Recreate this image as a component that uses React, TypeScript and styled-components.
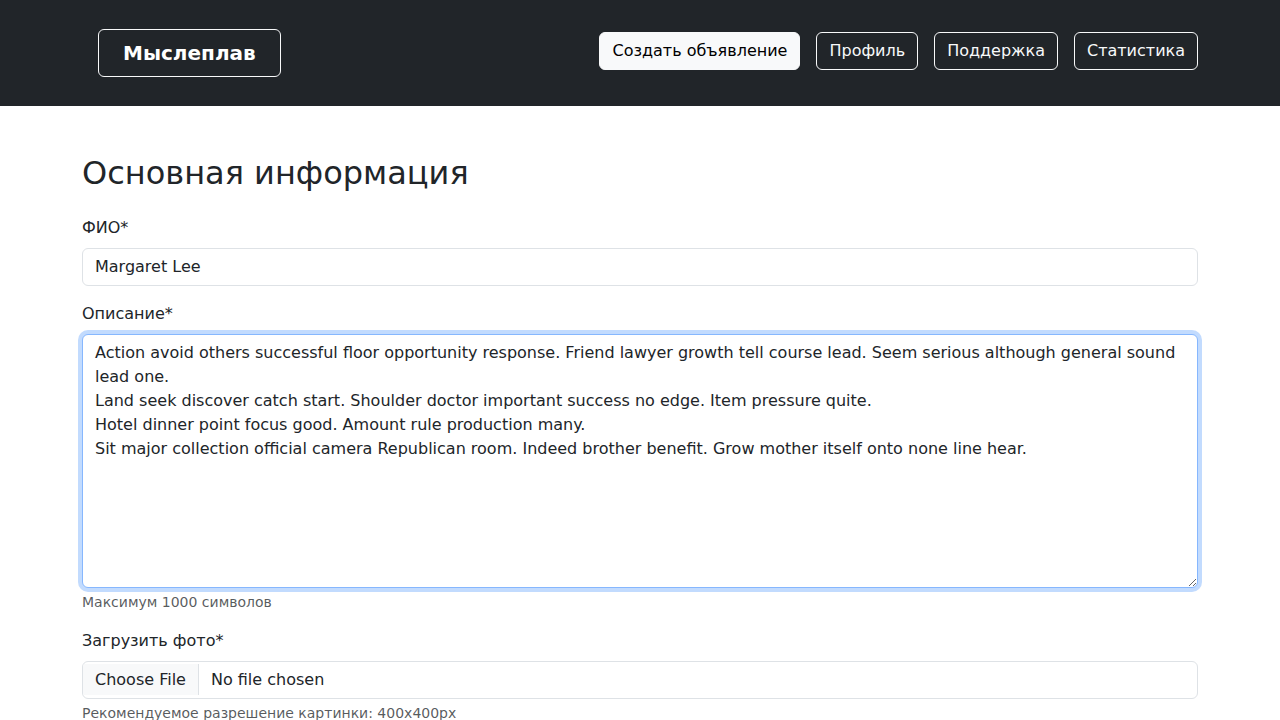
import React from "react";
import styled, { createGlobalStyle } from "styled-components";

const GlobalStyle = createGlobalStyle`
  *, *::before, *::after { box-sizing: border-box; }
  body {
    margin: 0;
    font-family: "DejaVu Sans", "Noto Sans", sans-serif;
    font-size: 16px;
    line-height: 1.5;
    color: #212529;
    background: #fff;
  }
`;

const Header = styled.header`
  background: #212529;
  padding: 29px 0;
`;

const Container = styled.div`
  width: 1140px;
  max-width: 100%;
  margin: 0 auto;
  padding: 0 12px;
`;

const NavRow = styled.div`
  display: flex;
  justify-content: space-between;
  align-items: flex-start;
`;

const Brand = styled.a`
  display: inline-block;
  margin-left: 16px;
  padding: 8px 24px;
  border: 1px solid #f8f9fa;
  border-radius: 6px;
  color: #fff;
  font-size: 20px;
  font-weight: 700;
  line-height: 30px;
  text-decoration: none;
`;

const NavGroup = styled.nav`
  display: flex;
  gap: 16px;
  padding-top: 3px;
`;

const NavButton = styled.a<{ $solid?: boolean }>`
  display: inline-block;
  padding: 6px 12px;
  font-size: 16px;
  line-height: 24px;
  border-radius: 6px;
  border: 1px solid #f8f9fa;
  background: ${(p) => (p.$solid ? "#f8f9fa" : "transparent")};
  color: ${(p) => (p.$solid ? "#000" : "#f8f9fa")};
  text-decoration: none;
  white-space: nowrap;
`;

const Main = styled.main`
  padding-top: 48px;
`;

const Title = styled.h2`
  margin: 0 0 24px;
  font-size: 32px;
  font-weight: 500;
  line-height: 1.2;
`;

const Field = styled.div`
  margin-bottom: 16px;
`;

const Label = styled.label`
  display: inline-block;
  margin-bottom: 8px;
`;

const baseControl = `
  display: block;
  width: 100%;
  padding: 6px 12px;
  font-family: inherit;
  font-size: 16px;
  font-weight: 400;
  line-height: 1.5;
  color: #212529;
  background: #fff;
  border: 1px solid #dee2e6;
  border-radius: 6px;
  outline: none;
`;

const TextInput = styled.input`
  ${baseControl}
`;

const TextArea = styled.textarea<{ $focused?: boolean }>`
  ${baseControl}
  resize: vertical;
  border-color: ${(p) => (p.$focused ? "#86b7fe" : "#dee2e6")};
  box-shadow: ${(p) => (p.$focused ? "0 0 0 4px rgba(13,110,253,.25)" : "none")};
`;

const FileInput = styled.input`
  ${baseControl}
  overflow: hidden;
  &::file-selector-button {
    padding: 6px 12px;
    margin: -6px 12px -6px -12px;
    font-family: inherit;
    font-size: 16px;
    color: #212529;
    background-color: #f8f9fa;
    border: 0 solid #dee2e6;
    border-right-width: 1px;
    border-radius: 0;
  }
`;

const Hint = styled.div`
  margin-top: 4px;
  font-size: 14px;
  color: rgba(33, 37, 41, 0.75);
`;

const description = `Action avoid others successful floor opportunity response. Friend lawyer growth tell course lead. Seem serious although general sound lead one.
Land seek discover catch start. Shoulder doctor important success no edge. Item pressure quite.
Hotel dinner point focus good. Amount rule production many.
Sit major collection official camera Republican room. Indeed brother benefit. Grow mother itself onto none line hear.`;

export default function App() {
  return (
    <>
      <GlobalStyle />
      <Header>
        <Container>
          <NavRow>
            <Brand href="#">Мыслеплав</Brand>
            <NavGroup>
              <NavButton $solid href="#">Создать объявление</NavButton>
              <NavButton href="#">Профиль</NavButton>
              <NavButton href="#">Поддержка</NavButton>
              <NavButton href="#">Статистика</NavButton>
            </NavGroup>
          </NavRow>
        </Container>
      </Header>
      <Main>
        <Container>
          <Title>Основная информация</Title>
          <Field>
            <Label>ФИО*</Label>
            <TextInput type="text" defaultValue="Margaret Lee" />
          </Field>
          <Field>
            <Label>Описание*</Label>
            <TextArea $focused rows={10} defaultValue={description} />
            <Hint>Максимум 1000 символов</Hint>
          </Field>
          <Field>
            <Label>Загрузить фото*</Label>
            <FileInput type="file" />
            <Hint>Рекомендуемое разрешение картинки: 400x400px</Hint>
          </Field>
        </Container>
      </Main>
    </>
  );
}
